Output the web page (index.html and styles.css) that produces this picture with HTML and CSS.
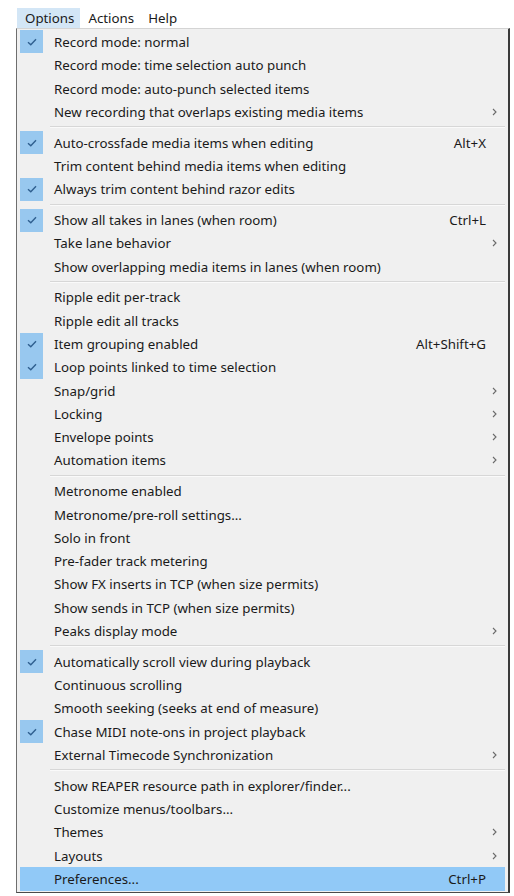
FILE: index.html
```html
<!DOCTYPE html>
<html>
<head>
<meta charset="utf-8">
<link rel="stylesheet" href="styles.css">
</head>
<body>
<div class="menubar">
  <span class="mb-item active">Options</span>
  <span class="mb-item">Actions</span>
  <span class="mb-item">Help</span>
</div>
<div class="menu">
  <div class="row checked"><span class="chk"><svg viewBox="0 0 10 8" width="10" height="8"><path d="M1 4.2 L3.8 6.8 L9 1.2"/></svg></span><span class="label">Record mode: normal</span><span class="key"></span><span class="arr"></span></div>
  <div class="row"><span class="chk"></span><span class="label">Record mode: time selection auto punch</span><span class="key"></span><span class="arr"></span></div>
  <div class="row"><span class="chk"></span><span class="label">Record mode: auto-punch selected items</span><span class="key"></span><span class="arr"></span></div>
  <div class="row"><span class="chk"></span><span class="label">New recording that overlaps existing media items</span><span class="key"></span><span class="arr"><svg viewBox="0 0 5 8" width="5" height="8"><path d="M1 1 L4 4 L1 7"/></svg></span></div>
  <div class="sep"></div>
  <div class="row checked"><span class="chk"><svg viewBox="0 0 10 8" width="10" height="8"><path d="M1 4.2 L3.8 6.8 L9 1.2"/></svg></span><span class="label">Auto-crossfade media items when editing</span><span class="key">Alt+X</span><span class="arr"></span></div>
  <div class="row"><span class="chk"></span><span class="label">Trim content behind media items when editing</span><span class="key"></span><span class="arr"></span></div>
  <div class="row checked"><span class="chk"><svg viewBox="0 0 10 8" width="10" height="8"><path d="M1 4.2 L3.8 6.8 L9 1.2"/></svg></span><span class="label">Always trim content behind razor edits</span><span class="key"></span><span class="arr"></span></div>
  <div class="sep"></div>
  <div class="row checked"><span class="chk"><svg viewBox="0 0 10 8" width="10" height="8"><path d="M1 4.2 L3.8 6.8 L9 1.2"/></svg></span><span class="label">Show all takes in lanes (when room)</span><span class="key">Ctrl+L</span><span class="arr"></span></div>
  <div class="row"><span class="chk"></span><span class="label">Take lane behavior</span><span class="key"></span><span class="arr"><svg viewBox="0 0 5 8" width="5" height="8"><path d="M1 1 L4 4 L1 7"/></svg></span></div>
  <div class="row"><span class="chk"></span><span class="label">Show overlapping media items in lanes (when room)</span><span class="key"></span><span class="arr"></span></div>
  <div class="sep"></div>
  <div class="row"><span class="chk"></span><span class="label">Ripple edit per-track</span><span class="key"></span><span class="arr"></span></div>
  <div class="row"><span class="chk"></span><span class="label">Ripple edit all tracks</span><span class="key"></span><span class="arr"></span></div>
  <div class="row checked"><span class="chk"><svg viewBox="0 0 10 8" width="10" height="8"><path d="M1 4.2 L3.8 6.8 L9 1.2"/></svg></span><span class="label">Item grouping enabled</span><span class="key">Alt+Shift+G</span><span class="arr"></span></div>
  <div class="row checked"><span class="chk"><svg viewBox="0 0 10 8" width="10" height="8"><path d="M1 4.2 L3.8 6.8 L9 1.2"/></svg></span><span class="label">Loop points linked to time selection</span><span class="key"></span><span class="arr"></span></div>
  <div class="row"><span class="chk"></span><span class="label">Snap/grid</span><span class="key"></span><span class="arr"><svg viewBox="0 0 5 8" width="5" height="8"><path d="M1 1 L4 4 L1 7"/></svg></span></div>
  <div class="row"><span class="chk"></span><span class="label">Locking</span><span class="key"></span><span class="arr"><svg viewBox="0 0 5 8" width="5" height="8"><path d="M1 1 L4 4 L1 7"/></svg></span></div>
  <div class="row"><span class="chk"></span><span class="label">Envelope points</span><span class="key"></span><span class="arr"><svg viewBox="0 0 5 8" width="5" height="8"><path d="M1 1 L4 4 L1 7"/></svg></span></div>
  <div class="row"><span class="chk"></span><span class="label">Automation items</span><span class="key"></span><span class="arr"><svg viewBox="0 0 5 8" width="5" height="8"><path d="M1 1 L4 4 L1 7"/></svg></span></div>
  <div class="sep"></div>
  <div class="row"><span class="chk"></span><span class="label">Metronome enabled</span><span class="key"></span><span class="arr"></span></div>
  <div class="row"><span class="chk"></span><span class="label">Metronome/pre-roll settings...</span><span class="key"></span><span class="arr"></span></div>
  <div class="row"><span class="chk"></span><span class="label">Solo in front</span><span class="key"></span><span class="arr"></span></div>
  <div class="row"><span class="chk"></span><span class="label">Pre-fader track metering</span><span class="key"></span><span class="arr"></span></div>
  <div class="row"><span class="chk"></span><span class="label">Show FX inserts in TCP (when size permits)</span><span class="key"></span><span class="arr"></span></div>
  <div class="row"><span class="chk"></span><span class="label">Show sends in TCP (when size permits)</span><span class="key"></span><span class="arr"></span></div>
  <div class="row"><span class="chk"></span><span class="label">Peaks display mode</span><span class="key"></span><span class="arr"><svg viewBox="0 0 5 8" width="5" height="8"><path d="M1 1 L4 4 L1 7"/></svg></span></div>
  <div class="sep"></div>
  <div class="row checked"><span class="chk"><svg viewBox="0 0 10 8" width="10" height="8"><path d="M1 4.2 L3.8 6.8 L9 1.2"/></svg></span><span class="label">Automatically scroll view during playback</span><span class="key"></span><span class="arr"></span></div>
  <div class="row"><span class="chk"></span><span class="label">Continuous scrolling</span><span class="key"></span><span class="arr"></span></div>
  <div class="row"><span class="chk"></span><span class="label">Smooth seeking (seeks at end of measure)</span><span class="key"></span><span class="arr"></span></div>
  <div class="row checked"><span class="chk"><svg viewBox="0 0 10 8" width="10" height="8"><path d="M1 4.2 L3.8 6.8 L9 1.2"/></svg></span><span class="label">Chase MIDI note-ons in project playback</span><span class="key"></span><span class="arr"></span></div>
  <div class="row"><span class="chk"></span><span class="label">External Timecode Synchronization</span><span class="key"></span><span class="arr"><svg viewBox="0 0 5 8" width="5" height="8"><path d="M1 1 L4 4 L1 7"/></svg></span></div>
  <div class="sep"></div>
  <div class="row"><span class="chk"></span><span class="label">Show REAPER resource path in explorer/finder...</span><span class="key"></span><span class="arr"></span></div>
  <div class="row"><span class="chk"></span><span class="label">Customize menus/toolbars...</span><span class="key"></span><span class="arr"></span></div>
  <div class="row"><span class="chk"></span><span class="label">Themes</span><span class="key"></span><span class="arr"><svg viewBox="0 0 5 8" width="5" height="8"><path d="M1 1 L4 4 L1 7"/></svg></span></div>
  <div class="row"><span class="chk"></span><span class="label">Layouts</span><span class="key"></span><span class="arr"><svg viewBox="0 0 5 8" width="5" height="8"><path d="M1 1 L4 4 L1 7"/></svg></span></div>
  <div class="row hover"><span class="chk"></span><span class="label">Preferences...</span><span class="key">Ctrl+P</span><span class="arr"></span></div>
</div>
</body>
</html>
```
FILE: styles.css
```css
html, body {
  margin: 0;
  padding: 0;
  background: #ffffff;
}
body {
  font-family: "Noto Sans", "Open Sans", sans-serif;
  font-size: 13.3px;
  color: #1a1a1a;
}
.menubar {
  display: flex;
  margin-top: 8px;
  padding-left: 17px;
  height: 20px;
  line-height: 20px;
}
.mb-item {
  padding: 0 6px 0 7px;
  margin-right: 1px;
}
.mb-item.active {
  background: #d3e6f6;
  padding-left: 8px;
}
.menu {
  box-sizing: border-box;
  margin-left: 16px;
  width: 494px;
  background: #f0f0f0;
  border-left: 1px solid #6e6e6e;
  border-right: 2px solid #3a3a3a;
  border-top: 1px solid #d4d4d4;
  border-bottom: 1px solid #4a4a4a;
  padding: 1.3px 3px 1.6px 3px;
}
.row {
  display: grid;
  grid-template-columns: 23px 1fr auto 19px;
  align-items: center;
  height: 23.3px;
}
.chk {
  width: 23px;
  height: 23px;
  display: flex;
  align-items: center;
  justify-content: center;
}
.row.checked .chk {
  background: #98c8ef;
}
.chk svg path {
  fill: none;
  stroke: #2f5f8f;
  stroke-width: 1.4;
}
.label {
  padding-left: 11px;
  white-space: nowrap;
}
.key {
  white-space: nowrap;
}
.arr {
  display: flex;
  align-items: center;
  padding-left: 6px;
}
.arr svg path {
  fill: none;
  stroke: #6a6a6a;
  stroke-width: 1.1;
}
.row.hover {
  background: #91c9f7;
}
.sep {
  height: 7.5px;
  display: flex;
  align-items: center;
  padding-left: 30px;
}
.sep::before {
  content: "";
  display: block;
  flex: 1;
  height: 1px;
  background: #d7d7d7;
  border-bottom: 1px solid #fafafa;
}
```
